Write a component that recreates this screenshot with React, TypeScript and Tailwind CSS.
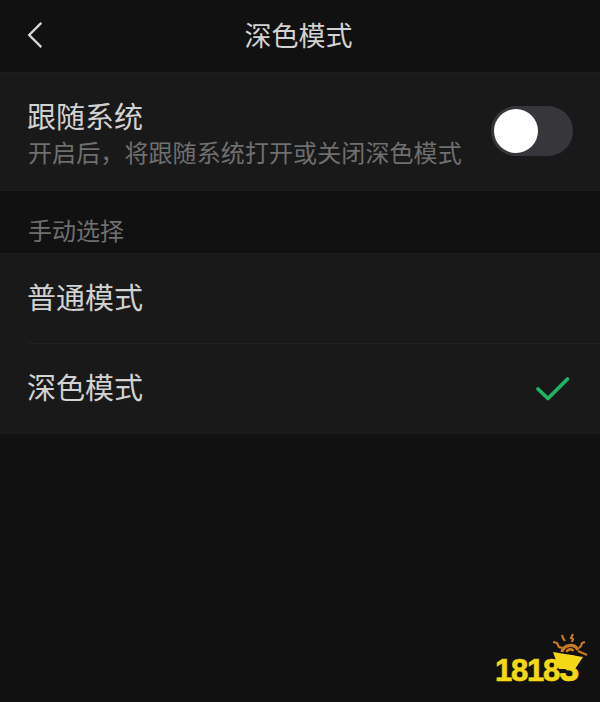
const cjk = "font-['Noto_Sans_CJK_SC','Noto_Sans_CJK_JP',sans-serif]";

const BackIcon = () => (
  <svg width="18" height="28" viewBox="0 0 18 28" fill="none" className="block">
    <path d="M15.3 1.8 3.2 14l12.1 12.2" stroke="#d4d4d4" strokeWidth="2.4" />
  </svg>
);

const CheckIcon = () => (
  <svg width="36" height="28" viewBox="0 0 36 28" fill="none" className="block">
    <path d="M3 14 13 23.5 32.5 4" stroke="#22b465" strokeWidth="3.7" strokeLinecap="round" strokeLinejoin="round" />
  </svg>
);

// 18183 mark: the numerals stay real text, the sun and the 3's wedge are drawn
const Logo = () => (
  <div className="absolute bottom-[19px] right-[12px] h-[52px] w-[93px]">
    <span className="absolute bottom-[-4px] left-0 flex items-baseline font-['Liberation_Sans',sans-serif] font-bold leading-none text-[#f4d816] [-webkit-text-stroke:0.7px_#f4d816]">
      <span className="text-[31px] tracking-[-1.2px]">1818</span>
      <span className="text-[36px]">3</span>
    </span>
    <svg width="38" height="40" viewBox="0 0 38 40" fill="none" className="absolute right-0 top-0">
      <path d="M12 21a8.5 8 0 0 1 16-2" stroke="#c77a22" strokeWidth="3.2" />
      <path d="M16.5 21a4 4 0 0 1 7-1" stroke="#c77a22" strokeWidth="2.6" />
      <path d="M3 11l4 1 2 4 4 1M12 4l1 3 2 3M23 3l-2 4 2 1-1 3M35 11l-3 1-1 3-2 2M28 20l9 4" stroke="#c77a22" strokeWidth="2.2" />
      <path d="M3 21l30 5-8 12H9z" fill="#f4d816" />
    </svg>
  </div>
);

const ModeRow = ({ label, checked }: { label: string; checked?: boolean }) => (
  <div className="flex h-[89px] items-center justify-between pl-[27px] pr-[29px]">
    <span className="pb-[4px] text-[29px] leading-none text-[#d2d2d2]">{label}</span>
    {checked && <CheckIcon />}
  </div>
);

export default function App() {
  return (
    <div className={`relative h-[702px] w-[600px] overflow-hidden bg-[#111111] ${cjk}`}>
      <header className="relative flex h-[72px] items-center justify-center">
        <div className="absolute left-[26px] top-[21px]">
          <BackIcon />
        </div>
        <h1 className="pb-[3px] pr-[3px] text-[27px] font-normal leading-none text-[#d2d2d2]">深色模式</h1>
      </header>

      <section className="flex h-[119px] items-center justify-between border-y border-y-[#1d1d1d] bg-[#191919] pl-[28px] pr-[27px]">
        <div>
          <div className="-ml-px text-[29px] leading-[40px] text-[#d2d2d2]">跟随系统</div>
          <div className="text-[24px] leading-[34px] tracking-[0.1px] text-[#6f6f6f]">开启后，将跟随系统打开或关闭深色模式</div>
        </div>
        <div className="mb-[2px] flex h-[50px] w-[82px] items-center rounded-full bg-[#37363b] pl-[3px]">
          <div className="size-[44px] rounded-full bg-white" />
        </div>
      </section>

      <div className="flex h-[62px] items-end pb-[6px] pl-[28px] text-[24px] leading-[34px] text-[#6f6f6f]">手动选择</div>

      <section className="border-y border-y-[#1b1b1b] bg-[#191919]">
        <ModeRow label="普通模式" />
        <div className="ml-[28px] h-px bg-[#212121]" />
        <ModeRow label="深色模式" checked />
      </section>

      <Logo />
    </div>
  );
}
